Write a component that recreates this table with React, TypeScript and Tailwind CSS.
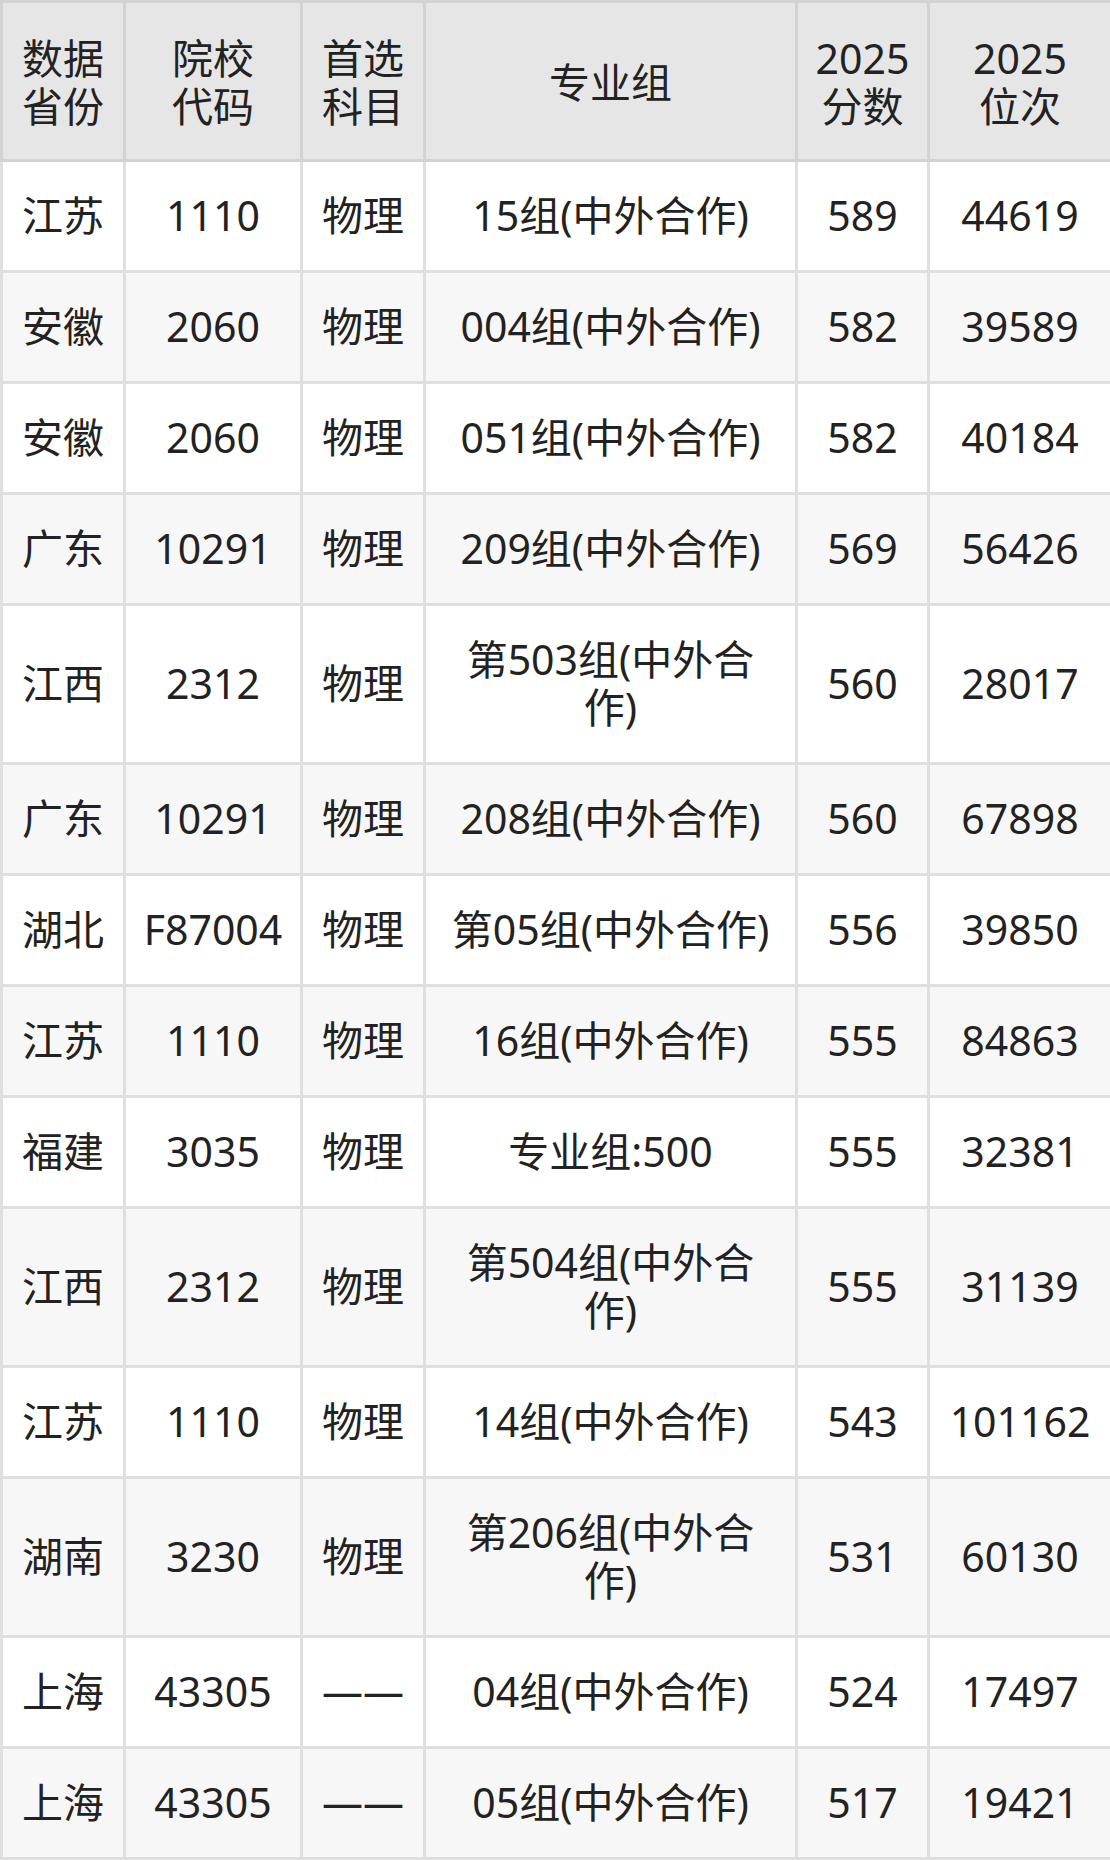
const rows = [
  ["江苏", "1110", "物理", "15组(中外合作)", "589", "44619"],
  ["安徽", "2060", "物理", "004组(中外合作)", "582", "39589"],
  ["安徽", "2060", "物理", "051组(中外合作)", "582", "40184"],
  ["广东", "10291", "物理", "209组(中外合作)", "569", "56426"],
  ["江西", "2312", "物理", "第503组(中外合作)", "560", "28017"],
  ["广东", "10291", "物理", "208组(中外合作)", "560", "67898"],
  ["湖北", "F87004", "物理", "第05组(中外合作)", "556", "39850"],
  ["江苏", "1110", "物理", "16组(中外合作)", "555", "84863"],
  ["福建", "3035", "物理", "专业组:500", "555", "32381"],
  ["江西", "2312", "物理", "第504组(中外合作)", "555", "31139"],
  ["江苏", "1110", "物理", "14组(中外合作)", "543", "101162"],
  ["湖南", "3230", "物理", "第206组(中外合作)", "531", "60130"],
  ["上海", "43305", "——", "04组(中外合作)", "524", "17497"],
  ["上海", "43305", "——", "05组(中外合作)", "517", "19421"],
];

const headers = [
  ["数据", "省份"],
  ["院校", "代码"],
  ["首选", "科目"],
  ["专业组"],
  ["2025", "分数"],
  ["2025", "位次"],
];

const widths = ["w-[123px]", "w-[177px]", "w-[123px]", "w-[372px]", "w-[132px]", "w-[183px]"];

export default function App() {
  return (
    <div className="w-[1110px] bg-white font-['Noto_Sans','Noto_Sans_CJK_SC',sans-serif] text-[#222] text-[41px] leading-[48px]">
      <table className="w-[1110px] table-fixed border-collapse">
        <colgroup>
          {widths.map((w, i) => (
            <col key={i} className={w} />
          ))}
        </colgroup>
        <thead>
          <tr className="bg-[#e6e6e6]">
            {headers.map((h, i) => (
              <th
                key={i}
                className="border-[3px] border-[#d3d3d3] pt-[31px] pb-[29px] font-normal text-center align-middle whitespace-nowrap"
              >
                {h.map((line, j) => (
                  <div key={j}>{line}</div>
                ))}
              </th>
            ))}
          </tr>
        </thead>
        <tbody>
          {rows.map((r, i) => (
            <tr key={i} className={i % 2 === 0 ? "bg-white" : "bg-[#f7f7f7]"}>
              {r.map((cell, j) => (
                <td
                  key={j}
                  className={
                    j === 3
                      ? "border-[3px] border-[#dfdfdf] pt-[29px] pb-[31px] px-5 text-center align-middle"
                      : "border-[3px] border-[#dfdfdf] pt-[29px] pb-[31px] text-center align-middle whitespace-nowrap"
                  }
                >
                  {cell}
                </td>
              ))}
            </tr>
          ))}
        </tbody>
      </table>
    </div>
  );
}
